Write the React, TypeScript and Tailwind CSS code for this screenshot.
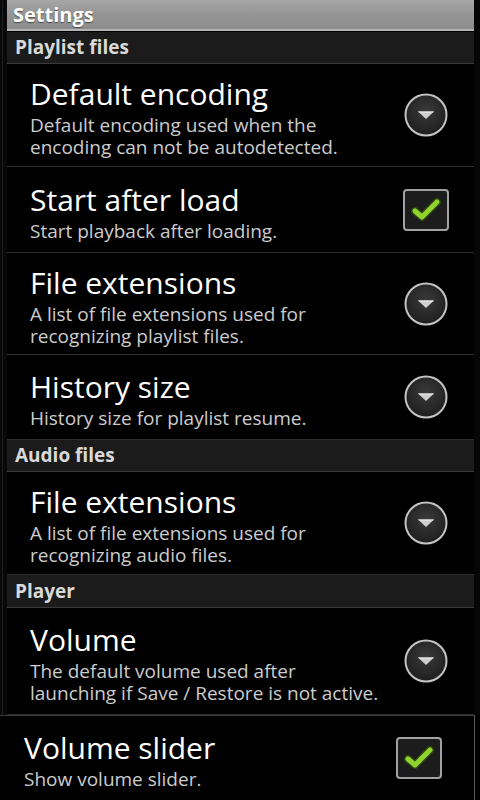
import React from "react";

const font = { fontFamily: '"Open Sans", "DejaVu Sans", sans-serif' };

function Spinner() {
  return (
    <svg width="46" height="46" viewBox="0 0 46 46">
      <defs>
        <radialGradient id="sg" cx="50%" cy="40%" r="60%">
          <stop offset="0%" stopColor="#3a3a3a" />
          <stop offset="100%" stopColor="#1e1e1e" />
        </radialGradient>
      </defs>
      <circle cx="23" cy="23" r="20.5" fill="url(#sg)" stroke="#c4c4c4" strokeWidth="2" />
      <path d="M15 19.5 L31 19.5 L23 27 Z" fill="#d0d0d0" />
      <path d="M15 19.5 L31 19.5 L30 20.5 L16 20.5 Z" fill="#f0f0f0" />
    </svg>
  );
}

function Check() {
  return (
    <svg width="46" height="42" viewBox="0 0 46 42">
      <rect x="1" y="1" width="44" height="40" rx="3" fill="#1c1c1c" stroke="#a2a2a2" strokeWidth="2" />
      <path d="M12 22 L19 28 L34 13" fill="none" stroke="#2d4410" strokeWidth="8" strokeLinecap="round" strokeLinejoin="round" />
      <path d="M12 22 L19 28 L34 13" fill="none" stroke="#8fd32c" strokeWidth="5" strokeLinecap="round" strokeLinejoin="round" />
    </svg>
  );
}

function Header({ text, h }: { text: string; h: string }) {
  return (
    <div className={`${h} bg-[#1b1b1b] border-b border-[#3a3a3a] flex items-center pl-[8px]`}>
      <span className="text-[19px] font-bold text-[#d9d9d9]" style={font}>
        {text}
      </span>
    </div>
  );
}

function Texts({ title, lines }: { title: string; lines: string[] }) {
  return (
    <div className="flex-1 flex flex-col pt-[4px]" style={font}>
      <div className="text-[30px] leading-[36px] text-white whitespace-nowrap">{title}</div>
      <div className="mt-[2px] flex flex-col">
        {lines.map((l, i) => (
          <div key={i} className="text-[19px] leading-[22px] text-[#cccccc] whitespace-nowrap">
            {l}
          </div>
        ))}
      </div>
    </div>
  );
}

function Row({
  title,
  lines,
  kind,
  h,
}: {
  title: string;
  lines: string[];
  kind: "spin" | "check";
  h: string;
}) {
  return (
    <div className={`${h} border-b border-[#2e2e2e] flex items-center pl-[23px] pr-[25px]`}>
      <Texts title={title} lines={lines} />
      <div className="w-[46px] flex justify-center">{kind === "spin" ? <Spinner /> : <Check />}</div>
    </div>
  );
}

export default function App() {
  return (
    <div className="w-[480px] h-[800px] bg-black overflow-hidden flex flex-col">
      <div className="flex flex-1 min-h-0">
        <div className="w-[7px] bg-[#080808] flex">
          <div className="w-[2px]" />
          <div className="w-[1px] bg-[#1e1e1e]" />
        </div>
        <div className="w-[467px] flex flex-col">
          <div className="h-[31px] bg-gradient-to-b from-[#a6a6a6] via-[#959595] to-[#8c8c8c] border-b-2 border-[#b4b4b4] flex items-center pl-[6px]">
            <span
              className="text-[20px] font-bold text-white [text-shadow:0_1px_1px_rgba(0,0,0,0.5)]"
              style={font}
            >
              Settings
            </span>
          </div>
          <div className="h-[1px]" />
          <Header text="Playlist files" h="h-[32px]" />
          <Row
            title="Default encoding"
            lines={["Default encoding used when the", "encoding can not be autodetected."]}
            kind="spin"
            h="h-[103px]"
          />
          <Row title="Start after load" lines={["Start playback after loading."]} kind="check" h="h-[86px]" />
          <Row
            title="File extensions"
            lines={["A list of file extensions used for", "recognizing playlist files."]}
            kind="spin"
            h="h-[102px]"
          />
          <Row title="History size" lines={["History size for playlist resume."]} kind="spin" h="h-[85px]" />
          <Header text="Audio files" h="h-[32px]" />
          <Row
            title="File extensions"
            lines={["A list of file extensions used for", "recognizing audio files."]}
            kind="spin"
            h="h-[103px]"
          />
          <Header text="Player" h="h-[33px]" />
          <Row
            title="Volume"
            lines={["The default volume used after", "launching if Save / Restore is not active."]}
            kind="spin"
            h="h-[107px]"
          />
        </div>
        <div className="w-[6px] bg-[#060606]" />
      </div>
      <div className="h-[85px] flex shrink-0">
        <div className="w-[474px] border-t border-[#3a3a3a] flex items-center pl-[24px] pr-[32px]">
          <Texts title="Volume slider" lines={["Show volume slider."]} />
          <Check />
        </div>
        <div className="w-[1px] bg-[#5a5a5a]" />
      </div>
    </div>
  );
}
